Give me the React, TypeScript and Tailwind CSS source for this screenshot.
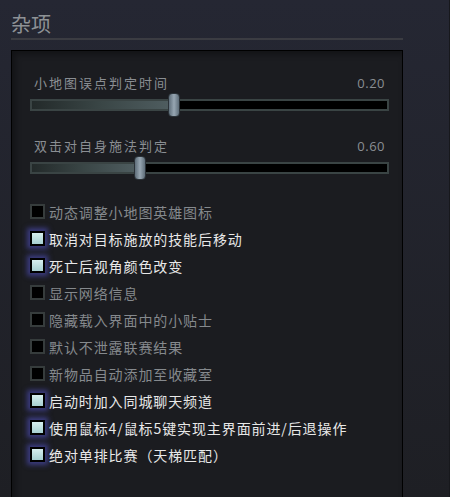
import React from 'react';

interface SliderRow {
  label: string;
  value: string;
  thumbLeft: number; // px from track start
}

interface OptionRow {
  label: string;
  checked: boolean;
}

const sliders: SliderRow[] = [
  { label: '小地图误点判定时间', value: '0.20', thumbLeft: 138 },
  { label: '双击对自身施法判定', value: '0.60', thumbLeft: 104 },
];

const options: OptionRow[] = [
  { label: '动态调整小地图英雄图标', checked: false },
  { label: '取消对目标施放的技能后移动', checked: true },
  { label: '死亡后视角颜色改变', checked: true },
  { label: '显示网络信息', checked: false },
  { label: '隐藏载入界面中的小贴士', checked: false },
  { label: '默认不泄露联赛结果', checked: false },
  { label: '新物品自动添加至收藏室', checked: false },
  { label: '启动时加入同城聊天频道', checked: true },
  { label: '使用鼠标4/鼠标5键实现主界面前进/后退操作', checked: true },
  { label: '绝对单排比赛（天梯匹配）', checked: true },
];

const font = "font-['Noto_Sans_CJK_SC','Noto_Sans',sans-serif]";

const Slider = ({ row }: { row: SliderRow }) => (
  <div>
    <div className="flex justify-between px-[4px] h-[20px] items-center">
      <span className="text-[13px] leading-[20px] tracking-[2px] text-[#8a8e93]">{row.label}</span>
      <span className="text-[13px] leading-[20px] tracking-[0.5px] text-[#8a8e93] font-['Open_Sans',sans-serif]">{row.value}</span>
    </div>
    <div className="relative h-[24px] flex items-center">
      <div className="w-full h-[12px] border-2 border-[#3a4444] bg-black overflow-hidden">
        <div
          className="h-full bg-gradient-to-r from-[#232a2a] via-[#3a4646] to-[#4f5d60]"
          style={{ width: row.thumbLeft }}
        />
      </div>
      <div
        className="absolute top-0 w-[12px] h-[24px] rounded-[4px] border border-[#2b3238] bg-gradient-to-r from-[#5f6e7a] via-[#97a6b2] to-[#5f6e7a]"
        style={{ left: row.thumbLeft }}
      />
    </div>
  </div>
);

const Option = ({ row }: { row: OptionRow }) => (
  <div className="flex items-center h-[27px]">
    {row.checked ? (
      <div className="w-[15px] h-[15px] border-2 border-black bg-gradient-to-b from-[#d6eeee] to-[#a6cfd1] shadow-[0_0_5px_3px_rgba(70,70,160,0.75)]" />
    ) : (
      <div className="w-[15px] h-[15px] border-2 border-[#363c3c] bg-black" />
    )}
    <span
      className={`ml-[4px] text-[14px] leading-[20px] tracking-[0.9px] ${
        row.checked ? 'text-[#e8e8e8]' : 'text-[#85898d]'
      }`}
    >
      {row.label}
    </span>
  </div>
);

export default function App() {
  return (
    <div
      className={`${font} w-[450px] h-[497px] overflow-hidden bg-gradient-to-b from-[#252733] to-[#1e1f24] border-r border-[#17181c]`}
    >
      <div className="ml-[11px] w-[392px]">
        <div className="pt-[12px] pb-[2px] border-b-2 border-[#3b3c42]">
          <h1 className="text-[20px] leading-[24px] tracking-[0px] text-[#8e9296]">杂项</h1>
        </div>
        <div className="mt-[10px] h-[460px] border border-black bg-[#1b1c20] shadow-[inset_3px_3px_6px_rgba(0,0,0,0.35)] pt-[22px] pl-[18px] pr-[13px]">
          <div className="flex flex-col gap-[19px]">
            {sliders.map((s) => (
              <Slider key={s.label} row={s} />
            ))}
          </div>
          <div className="mt-[18px]">
            {options.map((o) => (
              <Option key={o.label} row={o} />
            ))}
          </div>
        </div>
      </div>
    </div>
  );
}
